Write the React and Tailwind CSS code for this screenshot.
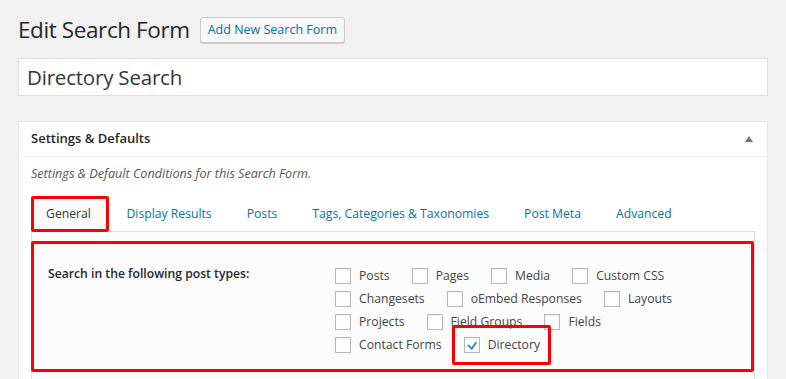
const TABS = ['Display Results', 'Posts', 'Tags, Categories & Taxonomies', 'Post Meta', 'Advanced']

const ROWS = [
  [['Posts'], ['Pages'], ['Media'], ['Custom CSS']],
  [['Changesets'], ['oEmbed Responses'], ['Layouts']],
  [['Projects'], ['Field Groups'], ['Fields']],
  [['Contact Forms'], ['Directory', true]],
]

function Box({ checked }) {
  return (
    <span className="w-4 h-4 shrink-0 bg-white border border-[#b4b9be] shadow-[inset_0_1px_2px_rgba(0,0,0,0.07)] flex items-center justify-center">
      {checked && (
        <svg width="15" height="15" viewBox="0 0 20 20">
          <path d="M15 4.5l2.2 1.6-7.3 10.2-6.6-5.8 1.8-2 4.4 3.9z" fill="#1e8cbe" />
        </svg>
      )}
    </span>
  )
}

function Item({ label, checked }) {
  const inner = (
    <span className="flex items-center gap-2">
      <Box checked={checked} />
      <span>{label}</span>
    </span>
  )
  if (checked) {
    return (
      <span className="-my-[11px] -ml-[12px] pl-[9px] pr-2 py-[8px] border-[3px] border-[#ff0000] rounded-[2px]">{inner}</span>
    )
  }
  return inner
}

export default function App() {
  return (
    <div className="min-h-screen bg-[#f1f1f1] text-[#444] px-[18px] pt-[17px] font-['Open_Sans',sans-serif] overflow-hidden h-[379px]">
      <div className="flex items-center gap-[10px]">
        <h1 className="text-[22.5px] leading-[26px] text-[#23282d] tracking-[-0.4px]">Edit Search Form</h1>
        <button className="h-[26px] px-[7px] text-[12.5px] text-[#0073aa] bg-[#f7f7f7] border border-[#ccc] rounded-[3px] shadow-[0_1px_0_#ccc]">
          Add New Search Form
        </button>
      </div>

      <div className="mt-[15px] h-[38px] bg-white border border-[#ddd] flex items-center px-2 text-[20.5px] text-[#32373c] tracking-[-0.2px]">
        Directory Search
      </div>

      <div className="mt-[25px] bg-white border border-[#e5e5e5] w-[750px]">
        <div className="h-[35px] border-b border-[#eee] flex items-center justify-between px-3">
          <span className="text-[13px] font-semibold text-[#23282d]">Settings &amp; Defaults</span>
          <svg width="8" height="6" viewBox="0 0 8 6" className="mr-[2px]">
            <path d="M4 0l4 6H0z" fill="#72777c" />
          </svg>
        </div>
        <div className="px-3 pt-[8px]">
          <p className="text-[12.6px] italic text-[#555] leading-[18px]">Settings &amp; Default Conditions for this Search Form.</p>
          <div className="flex items-end mt-[13px] text-[12.2px]">
            <span className="h-[36px] w-[78px] border-[3px] border-[#ff0000] rounded-[2px] bg-[#fafafa] flex items-center justify-center text-[#32373c] pr-[3px]">
              General
            </span>
            {TABS.map((t) => (
              <span key={t} className="h-[36px] px-[17.5px] flex items-center text-[#0073aa]">
                {t}
              </span>
            ))}
          </div>
          <div className="border-l border-r border-t border-[#ddd] bg-[#fcfcfc] -mt-[1px] pt-[9px] h-[160px]">
            <div className="border-[3px] border-[#ff0000] rounded-[2px] h-[131px] -ml-[1px] pl-[14px] pt-[21px] flex text-[12.2px]">
              <div className="w-[287px] font-semibold text-[#23282d] leading-[18px]">
                Search in the following post types:
              </div>
              <div className="flex flex-col gap-[7px] mt-[3px]">
                {ROWS.map((row, i) => (
                  <div key={i} className="flex items-center gap-[22px] h-4">
                    {row.map(([label, checked]) => (
                      <Item key={label} label={label} checked={checked} />
                    ))}
                  </div>
                ))}
              </div>
            </div>
          </div>
        </div>
      </div>
    </div>
  )
}
